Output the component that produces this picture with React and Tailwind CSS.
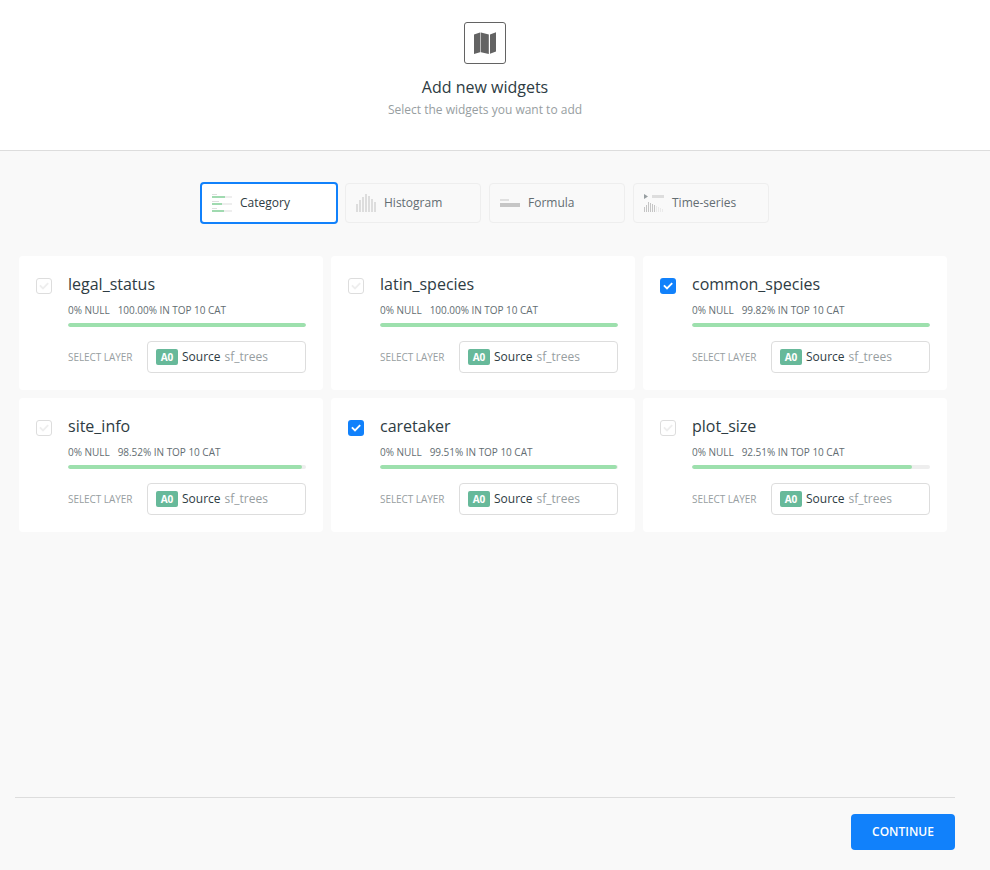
const FONT = "font-['Open_Sans',sans-serif]";

function MapIcon() {
  return (
    <svg width="22" height="22" viewBox="0 0 22 22" fill="#636363">
      <path d="M0 2.4 6 .6v19.6L0 22z" />
      <path d="M7 .6l7.8 1.8V22L7 20.2z" />
      <path d="M16 2.4 22 .2v19.4L16 21.8z" />
      <path d="M6 .6h1v19.6H6z" fill="#bdbdbd" />
    </svg>
  );
}

function CategoryIcon() {
  const rows = [
    { y: 0, label: 5, value: 13 },
    { y: 7, label: 7, value: 10 },
    { y: 14, label: 5, value: 12 },
  ];
  return (
    <svg width="20" height="18" shapeRendering="crispEdges">
      {rows.map((r) => (
        <g key={r.y}>
          <rect y={r.y} width={r.label} height="1" fill="#dedede" />
          <rect y={r.y + 2} width="20" height="2" fill="#eeeeee" />
          <rect y={r.y + 2} width={r.value} height="2" fill="#a0dab0" />
        </g>
      ))}
    </svg>
  );
}

function HistogramIcon() {
  return (
    <svg width="20" height="18" fill="#dddddd" shapeRendering="crispEdges">
      {[8, 12, 15, 18, 16, 13, 10].map((h, i) => (
        <rect key={i} x={i * 3} y={18 - h} width="2" height={h} />
      ))}
    </svg>
  );
}

function FormulaIcon() {
  return (
    <svg width="20" height="8" shapeRendering="crispEdges">
      <rect width="9" height="2" fill="#e0e0e0" />
      <rect y="4" width="20" height="4" fill="#c6c6c6" />
    </svg>
  );
}

function TimeSeriesIcon() {
  return (
    <svg width="20" height="18">
      <path d="M0 0l4 2.5L0 5z" fill="#979ea1" />
      <rect x="8" y="1" width="12" height="3" fill="#dddddd" />
      {[5, 7, 10, 9, 8, 7, 6, 5, 4, 3].map((h, i) => (
        <rect key={i} x={i * 2} y={18 - h} width="1" height={h} fill={i < 6 ? "#c4c4c4" : "#eaeaea"} />
      ))}
    </svg>
  );
}

const TABS = [
  { name: "Category", Icon: CategoryIcon, active: true },
  { name: "Histogram", Icon: HistogramIcon },
  { name: "Formula", Icon: FormulaIcon },
  { name: "Time-series", Icon: TimeSeriesIcon },
];

const WIDGETS = [
  { name: "legal_status", top: "100.00" },
  { name: "latin_species", top: "100.00" },
  { name: "common_species", top: "99.82", checked: true },
  { name: "site_info", top: "98.52" },
  { name: "caretaker", top: "99.51", checked: true },
  { name: "plot_size", top: "92.51" },
];

function Tab({ name, Icon, active }) {
  return (
    <button
      className={
        active
          ? "-mx-px flex h-[42px] w-[138px] items-center gap-2 rounded border-2 border-[#1181fb] bg-white pl-[10px] text-xs text-[#2e3c43]"
          : "flex h-10 w-[136px] items-center gap-2 rounded border border-[#eeeeee] pl-[10px] text-xs text-[#636d72]"
      }
    >
      <Icon />
      <span className="leading-4">{name}</span>
    </button>
  );
}

function Checkbox({ checked }) {
  return (
    <span
      className={
        checked
          ? "mt-[22px] flex size-4 shrink-0 items-center justify-center rounded-[3px] bg-[#1181fb]"
          : "mt-[22px] flex size-4 shrink-0 items-center justify-center rounded-[3px] border border-[#dddddd] bg-white"
      }
    >
      <svg width="10" height="8" viewBox="0 0 10 8" className="shrink-0" fill="none" stroke={checked ? "#fff" : "#eeeeee"} strokeWidth="1.9">
        <path d="M.9 3.4 4 6.4 9.2 1.2" />
      </svg>
    </span>
  );
}

function Card({ name, top, checked }) {
  return (
    <div className="flex h-[134px] gap-4 rounded bg-white px-[17px]">
      <Checkbox checked={checked} />
      <div className="flex-1 pt-[17px]">
        <h3 className="text-base leading-[22px] text-[#2e3c43]">{name}</h3>
        <p className="mt-2 flex gap-2 text-[10px] leading-[14px] tracking-[-0.03px] text-[#636d72]">
          <span>0% NULL</span>
          <span>{top}% IN TOP 10 CAT</span>
        </p>
        <div className="mt-[6px] h-1 overflow-hidden rounded-sm bg-[#eeeeee]">
          <div className="h-1 rounded-sm bg-[#9de0ad]" style={{ width: `${top}%` }} />
        </div>
        <div className="mt-[14px] flex items-center justify-between">
          <span className="text-[10px] leading-[14px] tracking-[-0.06px] text-[#979ea1]">SELECT LAYER</span>
          <div className="flex h-8 w-[159px] items-center gap-1 rounded border border-[#dddddd] pl-2 text-xs leading-4">
            <span className="flex h-4 w-[22px] items-center justify-center rounded-[2px] bg-[#67b99a] text-[10px] font-bold text-white">A0</span>
            <span className="text-[#2e3c43]">Source</span>
            <span className="text-[#979ea1]">sf_trees</span>
          </div>
        </div>
      </div>
    </div>
  );
}

export default function App() {
  return (
    <div className={`flex h-[870px] w-[990px] flex-col bg-[#f9f9f9] ${FONT}`}>
      <header className="h-[151px] border-b border-[#dddddd] bg-white pr-5 pt-[22px]">
        <div className="flex flex-col items-center">
          <div className="flex size-[42px] items-center justify-center rounded-[3px] border border-[#636363]">
            <MapIcon />
          </div>
          <h1 className="mt-3 text-base leading-[22px] text-[#2e3c43]">Add new widgets</h1>
          <p className="mt-1 text-xs leading-4 text-[#979ea1]">Select the widgets you want to add</p>
        </div>
      </header>
      <nav className="mt-[31px] flex h-[42px] items-center justify-center gap-2 pr-5">
        {TABS.map((t) => (
          <Tab key={t.name} {...t} />
        ))}
      </nav>
      <main className="ml-[19px] mt-8 grid w-[928px] grid-cols-3 gap-2">
        {WIDGETS.map((w) => (
          <Card key={w.name} {...w} />
        ))}
      </main>
      <footer className="mb-5 ml-[15px] mr-[35px] mt-auto flex justify-end border-t border-[#dddddd] pt-4">
        <button className="h-9 w-[104px] rounded bg-[#1181fb] text-xs font-semibold text-white">CONTINUE</button>
      </footer>
    </div>
  );
}
